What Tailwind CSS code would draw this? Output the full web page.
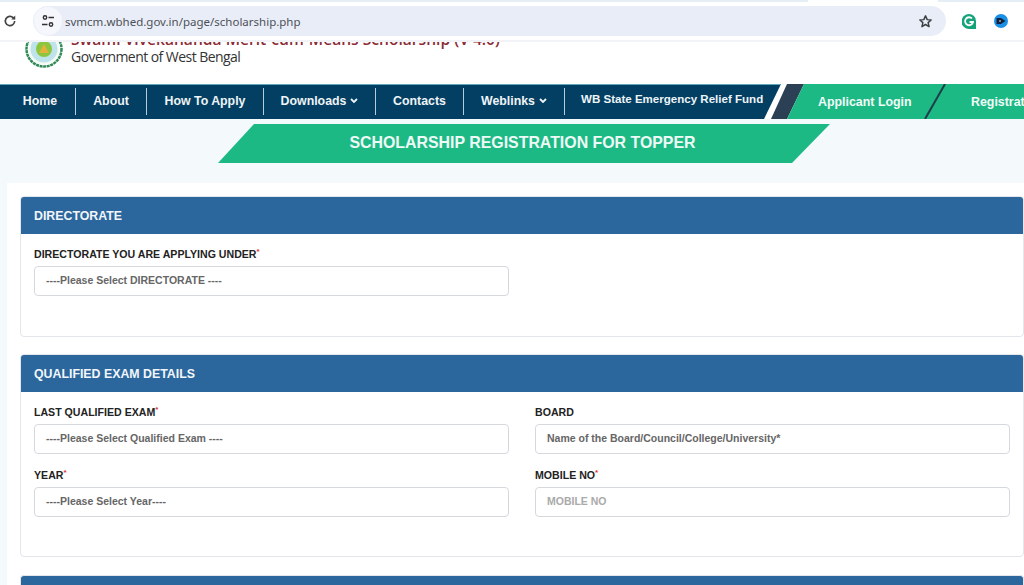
<!DOCTYPE html>
<html lang="en">
<head>
  <meta charset="UTF-8" />
  <title>Scholarship Registration</title>
  <script src="https://cdn.jsdelivr.net/npm/@tailwindcss/browser@4"></script>
</head>
<body class="bg-[#f4fafc] font-['Liberation_Sans',Arial,sans-serif] h-[585px] w-[1024px] overflow-hidden">

  <!-- browser bar -->
  <div class="h-[2px] flex">
    <div class="w-[808px] bg-[#e6eef5]"></div>
    <div class="w-[130px] bg-white"></div>
    <div class="flex-1 bg-[#e6eef5]"></div>
  </div>
  <div class="h-[40px] bg-white border-b-2 border-b-[#f1f3f6] flex items-center">
    <svg class="ml-[3px] w-[14px] h-[14px]" viewBox="0 0 24 24" fill="none" stroke="#444" stroke-width="2.8"><path d="M20 12a8 8 0 1 1-2.5-5.800L20 8.500"/><path d="M21 2.500v7h-7" fill="#444" stroke="none"/></svg>
    <div class="ml-[16px] w-[913px] h-[30px] rounded-full bg-[#e9edf7] flex items-center">
      <div class="ml-[1px] w-[28px] h-[28px] rounded-full bg-[#f6f7fc] flex items-center justify-center">
        <svg class="w-[14px] h-[14px]" viewBox="0 0 14 14" fill="none" stroke="#333" stroke-width="1.400"><circle cx="4" cy="3.500" r="1.700"/><path d="M7.500 3.500H13M1 10.500h5.500"/><circle cx="10" cy="10.500" r="1.700"/></svg>
      </div>
      <span class="ml-[3px] pt-[1px] text-[11.500px] text-[#4d5158] font-['Noto_Sans',sans-serif]">svmcm.wbhed.gov.in/page/scholarship.php</span>
      <svg class="ml-auto mr-[13px] w-[15px] h-[15px]" viewBox="0 0 24 24" fill="none" stroke="#3c4043" stroke-width="2.400" stroke-linejoin="round"><path d="M12 3l2.700 6 6.300.6-4.800 4.200 1.500 6.400L12 16.800 6.300 20.200l1.500-6.400L3 9.600 9.300 9z"/></svg>
    </div>
    <svg class="ml-[16px] w-[14px] h-[15px]" viewBox="0 0 14 15"><path d="M7 0a7 7 0 0 1 7 7v8H7A7 7 0 0 1 7 0z" fill="#15a37a"/><path d="M10 4.500A4 4 0 1 0 11 8H7.500" fill="none" stroke="#fff" stroke-width="1.800"/></svg>
    <svg class="ml-[18px] w-[14px] h-[14px]" viewBox="0 0 14 14"><circle cx="7" cy="7" r="7" fill="#1a8fe6"/><path d="M2.500 4h4.500l4.500 3-4.500 3H2.500z" fill="#10223f"/><circle cx="6" cy="7" r="0.800" fill="#fff"/></svg>
  </div>

  <!-- site header, scrolled so the title is cut off by the browser bar -->
  <div class="h-[42px] bg-white overflow-hidden flex items-start">
    <svg class="ml-[25px] mt-[-7px] w-[38px] h-[33px] shrink-0" viewBox="0 0 38 33">
      <circle cx="19" cy="14" r="17.500" fill="none" stroke="#2f8a57" stroke-width="2.500" stroke-dasharray="3 0.600"/>
      <circle cx="19" cy="14" r="15.500" fill="#f4faf4"/>
      <circle cx="19" cy="14" r="13.500" fill="#bfe3ea"/>
      <circle cx="19" cy="14" r="8" fill="#8cc63f"/>
      <path d="M19 9l5 9h-10z" fill="#e3b23c"/>
    </svg>
    <div class="ml-[8px] mt-[-12px]">
      <div class="text-[15.600px] leading-[18px] font-['Open_Sans',sans-serif] font-semibold text-[#8c2b33] whitespace-nowrap">Swami Vivekananda Merit-cum-Means Scholarship (V 4.0)</div>
      <div class="text-[14px] leading-[18px] font-['Open_Sans',sans-serif] font-medium tracking-[-0.55px] text-[#333] whitespace-nowrap">Government of West Bengal</div>
    </div>
  </div>

  <!-- nav -->
  <div class="h-[35px] flex bg-white overflow-hidden font-bold text-[12.350px] text-[#eef4f7]">
    <div class="w-[781px] shrink-0 bg-[#033f63] border-t border-[#5fa9b8] pb-[2px] [clip-path:polygon(0_0,100%_0,764px_100%,0_100%)] flex items-center">
      <a class="w-[76px] pl-[5px] h-[27px] flex items-center justify-center border-r border-[#b8ccd8]">Home</a>
      <a class="w-[71px] h-[27px] flex items-center justify-center border-r border-[#b8ccd8]">About</a>
      <a class="w-[117px] h-[27px] flex items-center justify-center border-r border-[#b8ccd8]">How To Apply</a>
      <a class="w-[112px] h-[27px] flex items-center justify-center gap-[4px] border-r border-[#b8ccd8]">Downloads
        <svg class="w-[8px] h-[6px]" viewBox="0 0 8 6" fill="none" stroke="#eef4f7" stroke-width="1.800"><path d="M1 1l3 3 3-3"/></svg>
      </a>
      <a class="w-[88px] h-[27px] flex items-center justify-center border-r border-[#b8ccd8]">Contacts</a>
      <a class="w-[101px] h-[27px] flex items-center justify-center gap-[4px] border-r border-[#b8ccd8]">Weblinks
        <svg class="w-[8px] h-[6px]" viewBox="0 0 8 6" fill="none" stroke="#eef4f7" stroke-width="1.800"><path d="M1 1l3 3 3-3"/></svg>
      </a>
      <a class="pl-[16px] pb-[2px] whitespace-nowrap text-[11.550px]">WB State Emergency Relief Fund</a>
    </div>
    <div class="ml-[-10px] w-[33px] shrink-0 bg-[#2b3f55] [clip-path:polygon(16px_0,100%_0,16px_100%,0_100%)]"></div>
    <div class="ml-[-17px] flex-1 bg-[#1cb985] [clip-path:polygon(17px_0,100%_0,100%_100%,0_100%)] flex relative">
      <a class="pl-[31px] pt-[1px] flex items-center whitespace-nowrap text-[#f2fbf8] text-[12.400px]">Applicant Login</a>
      <svg class="absolute left-[137px] top-0 w-[22px] h-[35px]" viewBox="0 0 22 35"><path d="M21 0L1 35" stroke="#1f3d48" stroke-width="2"/></svg>
      <a class="absolute left-[184px] top-0 h-full pt-[1px] flex items-center whitespace-nowrap text-[#f2fbf8] text-[12.400px]">Registration</a>
    </div>
  </div>

  <!-- banner -->
  <div class="mt-[5px] ml-[218px] w-[612px] h-[39px] pb-[2px] pr-[3px] bg-[#1cb985] [clip-path:polygon(36px_0,100%_0,574px_100%,0_100%)] flex items-center justify-center text-[#eefaf6] font-bold text-[15.900px]">
    SCHOLARSHIP REGISTRATION FOR TOPPER
  </div>

  <!-- form -->
  <div class="mt-[20px] ml-[7px] bg-white pl-[13px] pt-[13px] flex flex-col gap-[18px]">

    <section class="h-[141px] border border-[#e3e6ea] rounded-[4px] overflow-hidden">
      <h2 class="h-[37px] pt-[1px] bg-[#2b669c] text-[#f2f6fa] font-bold text-[12.350px] flex items-center pl-[13px]">DIRECTORATE</h2>
      <div class="pl-[13px] pt-[12px] grid grid-cols-2 gap-x-[26px] pr-[13px]">
        <div>
          <label class="block h-[20px] text-[10.600px] font-bold text-[#222] leading-[16px]">DIRECTORATE YOU ARE APPLYING UNDER<sup class="text-[#d33]">*</sup></label>
          <div class="h-[30px] border border-[#d5d8dc] rounded-[4px] flex items-center pl-[11px] text-[10.500px] font-bold text-[#666]">----Please Select DIRECTORATE ----</div>
        </div>
      </div>
    </section>

    <section class="h-[203px] mt-[-1px] border border-[#e3e6ea] rounded-[4px] overflow-hidden">
      <h2 class="h-[37px] pt-[1px] bg-[#2b669c] text-[#f2f6fa] font-bold text-[12.350px] flex items-center pl-[13px]">QUALIFIED EXAM DETAILS</h2>
      <div class="pl-[13px] pr-[13px] pt-[12px] grid grid-cols-2 gap-x-[26px] gap-y-[13px]">
        <div>
          <label class="block h-[20px] text-[10.600px] font-bold text-[#222] leading-[16px]">LAST QUALIFIED EXAM<sup class="text-[#d33]">*</sup></label>
          <div class="h-[30px] border border-[#d5d8dc] rounded-[4px] flex items-center pl-[11px] text-[10.500px] font-bold text-[#666]">----Please Select Qualified Exam ----</div>
        </div>
        <div>
          <label class="block h-[20px] text-[10.600px] font-bold text-[#222] leading-[16px]">BOARD</label>
          <div class="h-[30px] border border-[#d5d8dc] rounded-[4px] flex items-center pl-[11px] text-[10.500px] font-bold text-[#666]">Name of the Board/Council/College/University*</div>
        </div>
        <div>
          <label class="block h-[20px] text-[10.600px] font-bold text-[#222] leading-[16px]">YEAR<sup class="text-[#d33]">*</sup></label>
          <div class="h-[30px] border border-[#d5d8dc] rounded-[4px] flex items-center pl-[11px] text-[10.500px] font-bold text-[#666]">----Please Select Year----</div>
        </div>
        <div>
          <label class="block h-[20px] text-[10.600px] font-bold text-[#222] leading-[16px]">MOBILE NO<sup class="text-[#d33]">*</sup></label>
          <div class="h-[30px] border border-[#d5d8dc] rounded-[4px] flex items-center pl-[11px] text-[10.500px] font-bold text-[#aaa]">MOBILE NO</div>
        </div>
      </div>
    </section>

    <section class="h-[10px] border-t border-x border-[#e3e6ea] rounded-t-[4px] bg-[#2b669c]"></section>
  </div>
</body>
</html>
